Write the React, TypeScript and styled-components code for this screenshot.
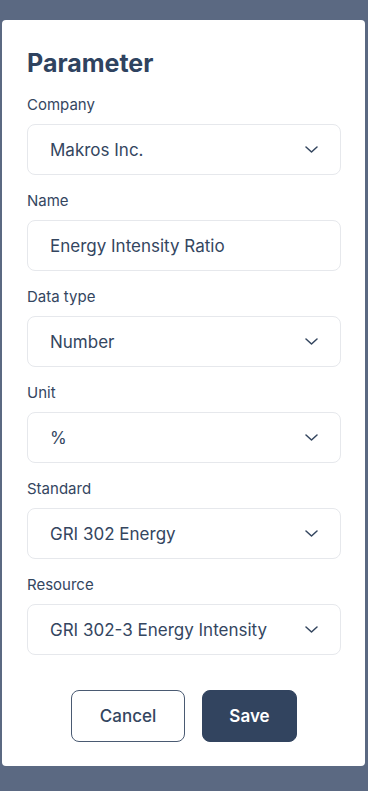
import styled, { createGlobalStyle } from 'styled-components';

const GlobalStyle = createGlobalStyle`
  html, body {
    margin: 0;
    padding: 0;
    background: #5b6982;
  }
  body {
    font-family: Inter, "Noto Sans", sans-serif;
    color: #2f4360;
  }
  * {
    box-sizing: border-box;
  }
`;

interface FieldT {
  label: string;
  value: string;
  select: boolean;
}

const fields: FieldT[] = [
  { label: 'Company', value: 'Makros Inc.', select: true },
  { label: 'Name', value: 'Energy Intensity Ratio', select: false },
  { label: 'Data type', value: 'Number', select: true },
  { label: 'Unit', value: '%', select: true },
  { label: 'Standard', value: 'GRI 302 Energy', select: true },
  { label: 'Resource', value: 'GRI 302-3 Energy Intensity', select: true },
];

const Chevron = () => (
  <svg width="13" height="7" viewBox="0 0 13 7" fill="none">
    <path
      d="M1 1l5.5 5 5.5-5"
      stroke="#34465f"
      strokeWidth="1.5"
      strokeLinecap="round"
      strokeLinejoin="round"
    />
  </svg>
);

const App = () => {
  return (
    <>
      <GlobalStyle />
      <Page>
        <Card>
          <Title>Parameter</Title>
          <Form>
            {fields.map(f => (
              <Group key={f.label}>
                <Label>{f.label}</Label>
                <Field>
                  <Value>{f.value}</Value>
                  {f.select && <Chevron />}
                </Field>
              </Group>
            ))}
          </Form>
          <Actions>
            <Button variant="outline">Cancel</Button>
            <Button variant="solid">Save</Button>
          </Actions>
        </Card>
      </Page>
    </>
  );
};

export default App;

const Page = styled.div`
  width: 368px;
  height: 791px;
  padding: 20px 3px 0 2px;
`;
const Card = styled.div`
  background: #ffffff;
  border-radius: 4px;
  height: 746px;
  padding: 27px 24px 0 25px;
  display: flex;
  flex-direction: column;
`;
const Title = styled.h1`
  margin: 0;
  font-size: 25px;
  line-height: 32px;
  font-weight: 700;
  color: #2f4360;
`;
const Form = styled.div`
  margin-top: 17px;
  display: flex;
  flex-direction: column;
  gap: 17px;
`;
const Group = styled.div`
  display: flex;
  flex-direction: column;
  gap: 10px;
`;
const Label = styled.div`
  font-size: 15px;
  line-height: 18px;
  color: #34465f;
`;
const Field = styled.div`
  height: 51px;
  border: 1px solid #e6e8ec;
  border-radius: 8px;
  display: flex;
  align-items: center;
  justify-content: space-between;
  padding: 0 22px 0 22px;
`;
const Value = styled.span`
  font-size: 17px;
  color: #34465f;
`;
const Actions = styled.div`
  margin-top: 35px;
  display: flex;
  justify-content: center;
  gap: 17px;
`;
const Button = styled.button<{ variant: 'outline' | 'solid' }>`
  height: 52px;
  width: ${p => (p.variant === 'outline' ? '114px' : '95px')};
  border-radius: 8px;
  font-family: Inter, "Noto Sans", sans-serif;
  font-size: 17px;
  font-weight: ${p => (p.variant === 'outline' ? 500 : 600)};
  border: 1px solid ${p => (p.variant === 'outline' ? '#4a5a72' : '#32445f')};
  background: ${p => (p.variant === 'outline' ? '#ffffff' : '#32445f')};
  color: ${p => (p.variant === 'outline' ? '#34465f' : '#ffffff')};
`;
